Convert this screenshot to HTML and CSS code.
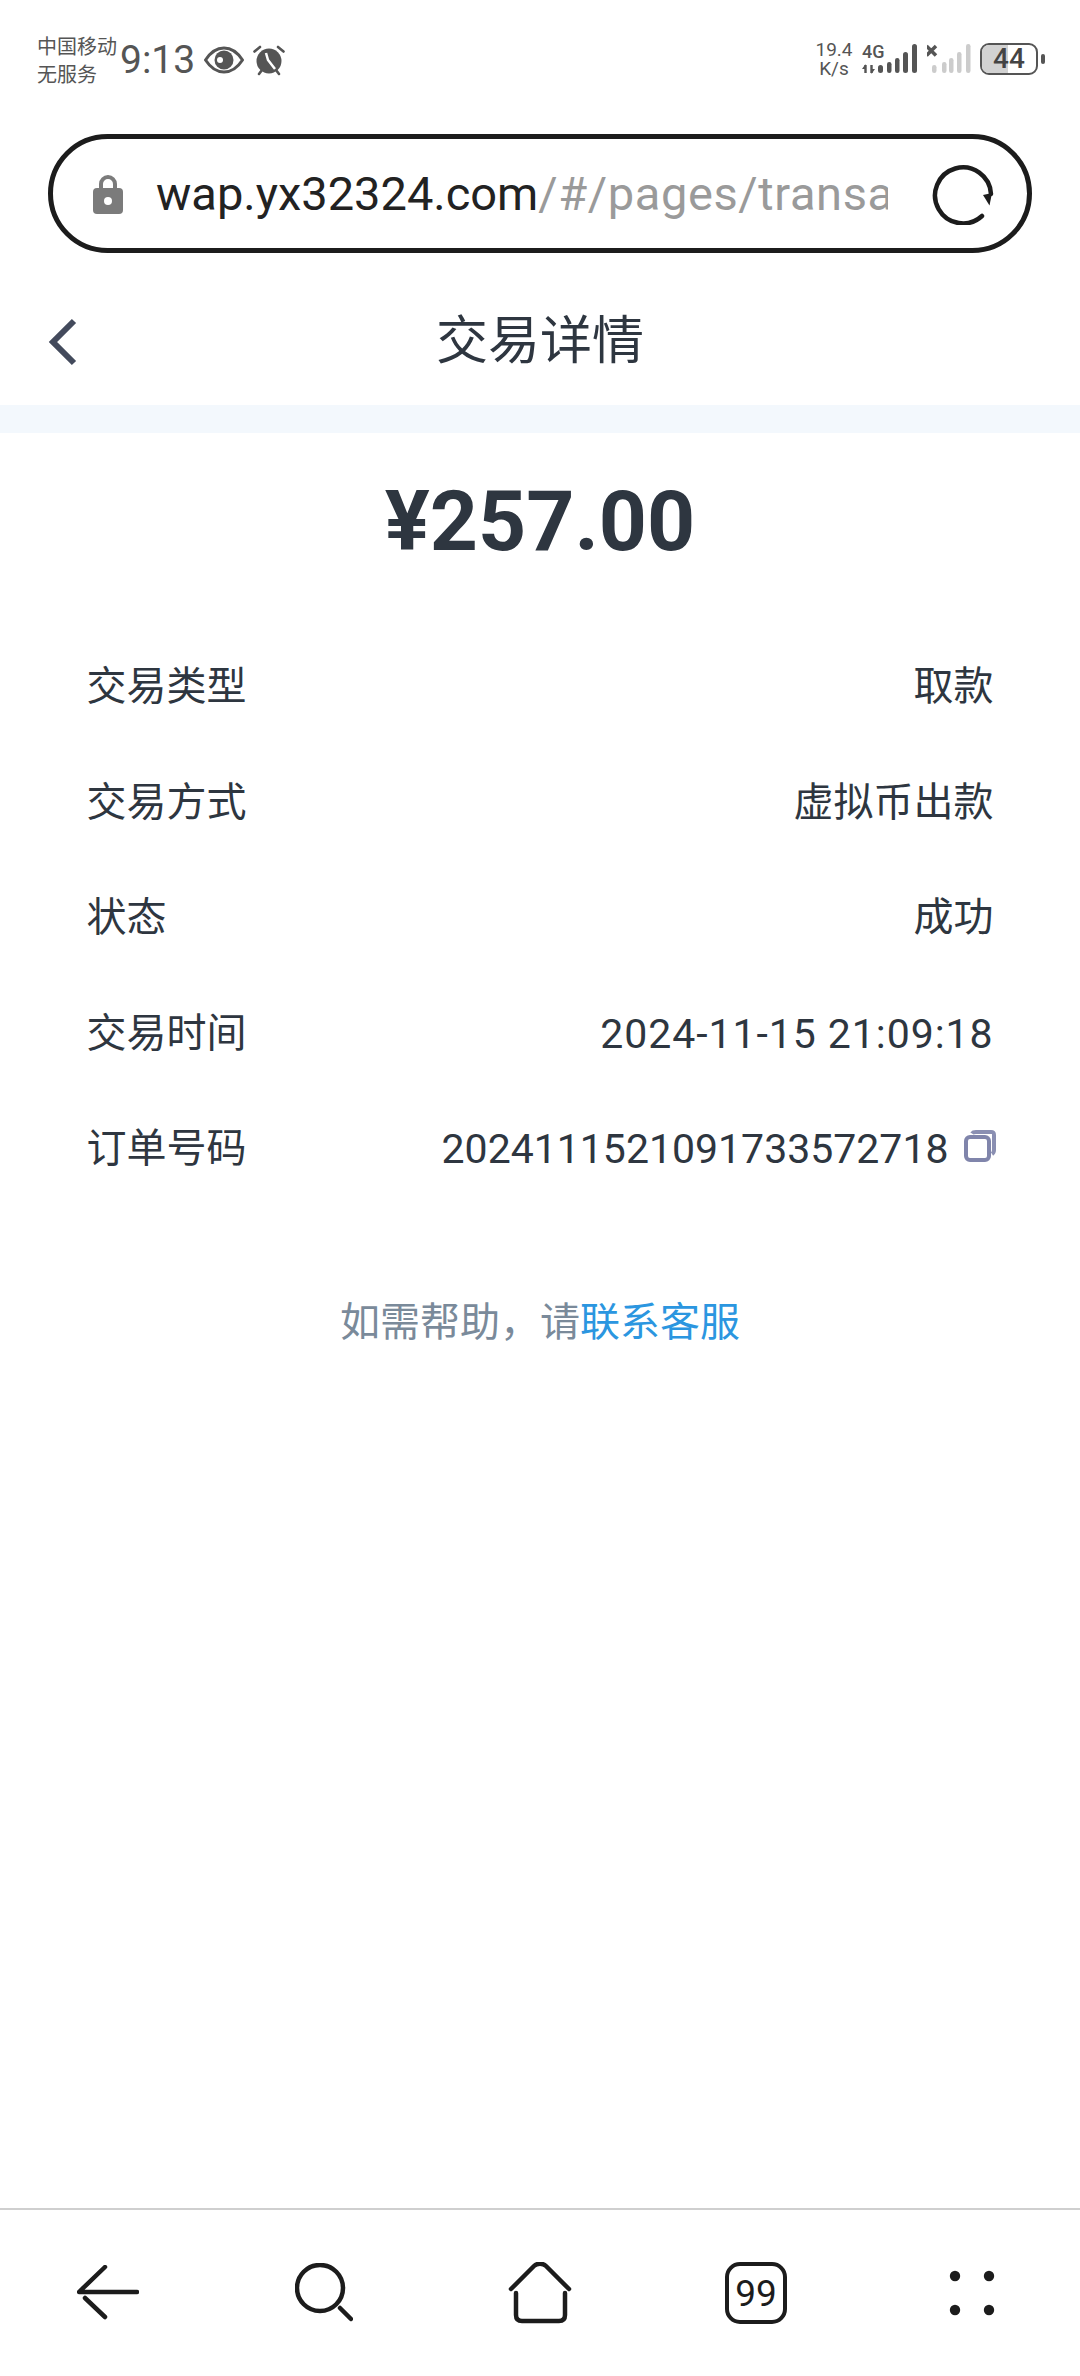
FILE: index.html
```html
<!DOCTYPE html>
<html lang="zh-CN">
<head>
<meta charset="utf-8">
<title>交易详情</title>
<link rel="stylesheet" href="styles.css">
</head>
<body>
<div class="phone">
  <header class="status">
    <div class="status-left">
      <div class="carrier"><span>中国移动</span><span>无服务</span></div>
      <span class="clock">9:13</span>
      <svg class="eye" width="40" height="28" viewBox="0 0 40 28"><path d="M1.5 14C7 5.5 13 2 20 2s13 3.5 18.5 12C33 22.5 27 26 20 26S7 22.5 1.5 14Z" fill="none" stroke="#555" stroke-width="3" stroke-linejoin="round"/><circle cx="20" cy="14" r="9.5" fill="#555"/><circle cx="16" cy="14" r="3" fill="#fff"/></svg>
      <svg class="alarm" width="32" height="31" viewBox="0 0 32 31"><path d="M1.5 6.500 7 2M30.500 6.500 25 2M6 29l3-4M26 29l-3-4" stroke="#555" stroke-width="2.600" stroke-linecap="round"/><circle cx="16" cy="16" r="12.500" fill="#555"/><path d="M13 8 15 15 22 24" fill="none" stroke="#fff" stroke-width="2.500"/></svg>
    </div>
    <div class="status-right">
      <div class="speed"><span>19.4</span><span>K/s</span></div>
      <svg class="signal" width="56" height="36" viewBox="0 -2 56 36">
        <text x="0" y="15" class="net">4G</text>
        <path d="M3.500 30V22M9.500 22V30" stroke="#555" stroke-width="2.400" fill="none"/>
        <path d="M0 26 3.500 21V26ZM13 26 9.500 31V26Z" fill="#555"/>
        <g fill="#555"><rect x="16" y="22" width="5" height="8" rx="2.500"/><rect x="25" y="19" width="4.500" height="11" rx="2.200"/><rect x="33" y="15" width="4.500" height="15" rx="2.200"/><rect x="41" y="9" width="5" height="21" rx="2.500"/><rect x="50" y="1" width="5" height="29" rx="2.500"/></g>
      </svg>
      <svg class="signal2" width="44" height="30" viewBox="0 0 44 30">
        <path d="M-.5 2.500 9 12M9 2.500-.5 12" transform="translate(0 -.5)" stroke="#555" stroke-width="3.500"/>
        <g fill="#ccc"><rect x="5" y="21" width="4.500" height="8" rx="2.200"/><rect x="15" y="18" width="4.500" height="11" rx="2.200"/><rect x="22" y="14" width="4.500" height="15" rx="2.200"/><rect x="30" y="8" width="4.500" height="21" rx="2.200"/><rect x="39" y="0" width="4.500" height="29" rx="2.200"/></g>
      </svg>
      <div class="battery"><div class="battery-fill"></div><span class="battery-num">44</span></div>
      <div class="battery-nub"></div>
    </div>
  </header>

  <div class="urlbar">
    <svg class="lock" width="30" height="40" viewBox="0 0 30 40"><path d="M8 17V10a7 7 0 0 1 14 0v7" fill="none" stroke="#7b7b7b" stroke-width="4"/><rect y="14" width="30" height="26" rx="4" fill="#7b7b7b"/><circle cx="15" cy="27" r="4" fill="#fff"/></svg>
    <div class="url"><span class="url-host">wap.yx32324.com</span><span class="url-path">/#/pages/transaction/detail</span></div>
    <svg class="reload" width="62" height="62" viewBox="0 0 62 62"><path d="M50 53A28 28 0 1 1 59 31" fill="none" stroke="#1c1c1c" stroke-width="4.500" stroke-linecap="round"/><path d="M51 32 60 30 57.500 42.500Z" fill="#1c1c1c"/></svg>
  </div>

  <nav class="nav">
    <svg class="chevron" width="30" height="48" viewBox="0 0 30 48"><path d="M26 3 5 24 26 45" fill="none" stroke="#434a5c" stroke-width="6"/></svg>
    <h1 class="title">交易详情</h1>
  </nav>
  <div class="band"></div>

  <main class="content">
    <div class="amount">¥257.00</div>
    <dl class="rows">
      <div class="row"><dt>交易类型</dt><dd>取款</dd></div>
      <div class="row"><dt>交易方式</dt><dd>虚拟币出款</dd></div>
      <div class="row"><dt>状态</dt><dd>成功</dd></div>
      <div class="row"><dt>交易时间</dt><dd class="num date">2024-11-15 21:09:18</dd></div>
      <div class="row"><dt>订单号码</dt><dd class="num order">2024111521091733572718<svg class="copy" width="32" height="32" viewBox="0 0 32 32"><path d="M8 3.500C9 2 10 2 12 2h15c2.500 0 3 1 3 3v15c0 2-.5 3-2 4" fill="none" stroke="#8a8fb2" stroke-width="4"/><rect x="2" y="7" width="23" height="23" rx="4" fill="#fff" stroke="#8085ab" stroke-width="4"/></svg></dd></div>
    </dl>
    <p class="help">如需帮助&#65292;请<a class="help-link">联系客服</a></p>
  </main>

  <footer class="toolbar">
    <svg width="62" height="56" viewBox="0 0 62 56"><path d="M28 2 2 27H60M8 33 28 52" fill="none" stroke="#1c1c1c" stroke-width="4.500" stroke-linecap="round" stroke-linejoin="round"/></svg>
    <svg width="58" height="60" viewBox="0 0 58 60"><circle cx="25" cy="25" r="23" fill="none" stroke="#1c1c1c" stroke-width="4.500"/><path d="M45 45 56 56" stroke="#1c1c1c" stroke-width="4.500" stroke-linecap="round"/></svg>
    <svg width="64" height="62" viewBox="0 0 64 62"><path d="M3 27 26 4c3-3 9-3 12 0L61 27M8 31V53c0 4 2 6 6 6H51c4 0 6-2 6-6V31" fill="none" stroke="#1c1c1c" stroke-width="4.500" stroke-linecap="round"/></svg>
    <div class="tabs"><span>99</span></div>
    <svg width="46" height="46" viewBox="0 0 46 46"><g fill="#1c1c1c"><circle cx="6" cy="6" r="5.200"/><circle cx="40" cy="6" r="5.200"/><circle cx="6" cy="40" r="5.200"/><circle cx="40" cy="40" r="5.200"/></g></svg>
  </footer>
</div>
</body>
</html>
```

FILE: styles.css
```css
* { box-sizing: border-box; margin: 0; padding: 0; }
html, body { background: #fff; }
body { font-family: "Noto Sans CJK SC", "Noto Sans", sans-serif; }
.phone { width: 1080px; height: 2376px; display: flex; flex-direction: column; overflow: hidden; background: #fff; color: #2e3640; }

.status { height: 134px; padding: 32px 35px 0 37px; display: flex; justify-content: space-between; align-items: flex-start; flex-shrink: 0; }
.status-left { display: flex; align-items: center; color: #555; }
.carrier { display: flex; flex-direction: column; font-size: 20px; line-height: 28px; width: 80px; }
.clock { font-family: "Roboto", sans-serif; font-size: 39px; line-height: 52px; width: 73px; margin-left: 3px; }
.eye { margin-left: 11px; }
.alarm { margin-left: 9px; }
.status-right { display: flex; align-items: center; color: #555; height: 44px; margin-top: 5px; }
.speed { display: flex; flex-direction: column; align-items: center; font-family: "Roboto", sans-serif; font-size: 19px; line-height: 19px; width: 38px; margin-right: 9px; }
.net { font-family: "Roboto", sans-serif; font-size: 18px; font-weight: 500; fill: #555; }
.signal { margin-right: 9px; }
.signal2 { margin-right: 9px; }
.battery { position: relative; width: 58px; height: 32px; border: 2.5px solid #555; border-radius: 9px; overflow: hidden; display: flex; justify-content: center; align-items: center; }
.battery-fill { position: absolute; left: 0; top: 0; bottom: 0; width: 49%; background: #d2d2d2; }
.battery-num { position: relative; font-family: "Roboto", sans-serif; font-size: 28px; font-weight: 500; line-height: 1; color: #444; }
.battery-nub { width: 4px; height: 10px; margin-left: 3px; background: #555; border-radius: 2px; }

.urlbar { margin: 0 48px; height: 119px; border: 5px solid #1c1c1c; border-radius: 60px; display: flex; align-items: center; padding: 0 22px 0 40px; flex-shrink: 0; }
.lock { flex-shrink: 0; }
.url { margin-left: 33px; width: 732px; flex-shrink: 0; overflow: hidden; white-space: nowrap; font-family: "Roboto", sans-serif; font-size: 47px; line-height: 70px; }
.url-host { color: #222; }
.url-path { color: #9a9a9a; letter-spacing: 0.6px; }
.reload { flex-shrink: 0; margin-left: 44px; }

.nav { height: 152px; padding: 16px 48px 0; display: grid; grid-template-columns: 1fr auto 1fr; align-items: center; flex-shrink: 0; }
.chevron { margin-top: 10px; }
.title { font-size: 52px; font-weight: 400; line-height: 70px; color: #2e3640; }
.band { height: 28px; background: #f3f8fd; flex-shrink: 0; }

.content { flex: 1; display: flex; flex-direction: column; padding: 0 86.5px; }
.amount { margin-top: 39px; text-align: center; font-family: "Roboto", sans-serif; font-size: 84px; font-weight: 700; line-height: 100px; color: #2e3640; }
.rows { margin-top: 56px; display: flex; flex-direction: column; }
.row { height: 115.5px; padding-bottom: 5px; display: flex; justify-content: space-between; align-items: center; font-size: 40px; }
.row dt, .row dd { display: flex; align-items: center; }
.num { font-family: "Roboto", sans-serif; font-size: 41px; margin-top: 8px; }
.date { letter-spacing: 0.95px; }
.copy { margin-top: -6px; margin-left: 15px; margin-right: -2px; }
.help { margin-top: 85px; text-align: center; font-size: 40px; line-height: 56px; color: #7a8a9a; }
.help-link { color: #2b96e0; }

.toolbar { height: 168px; border-top: 2px solid #cfcfcf; display: grid; grid-template-columns: repeat(5, 1fr); justify-items: center; align-items: center; flex-shrink: 0; }
.tabs { width: 62px; height: 62px; border: 4.5px solid #1c1c1c; border-radius: 15px; display: flex; align-items: center; justify-content: center; font-family: "Roboto", sans-serif; font-size: 37px; color: #1c1c1c; }
```
